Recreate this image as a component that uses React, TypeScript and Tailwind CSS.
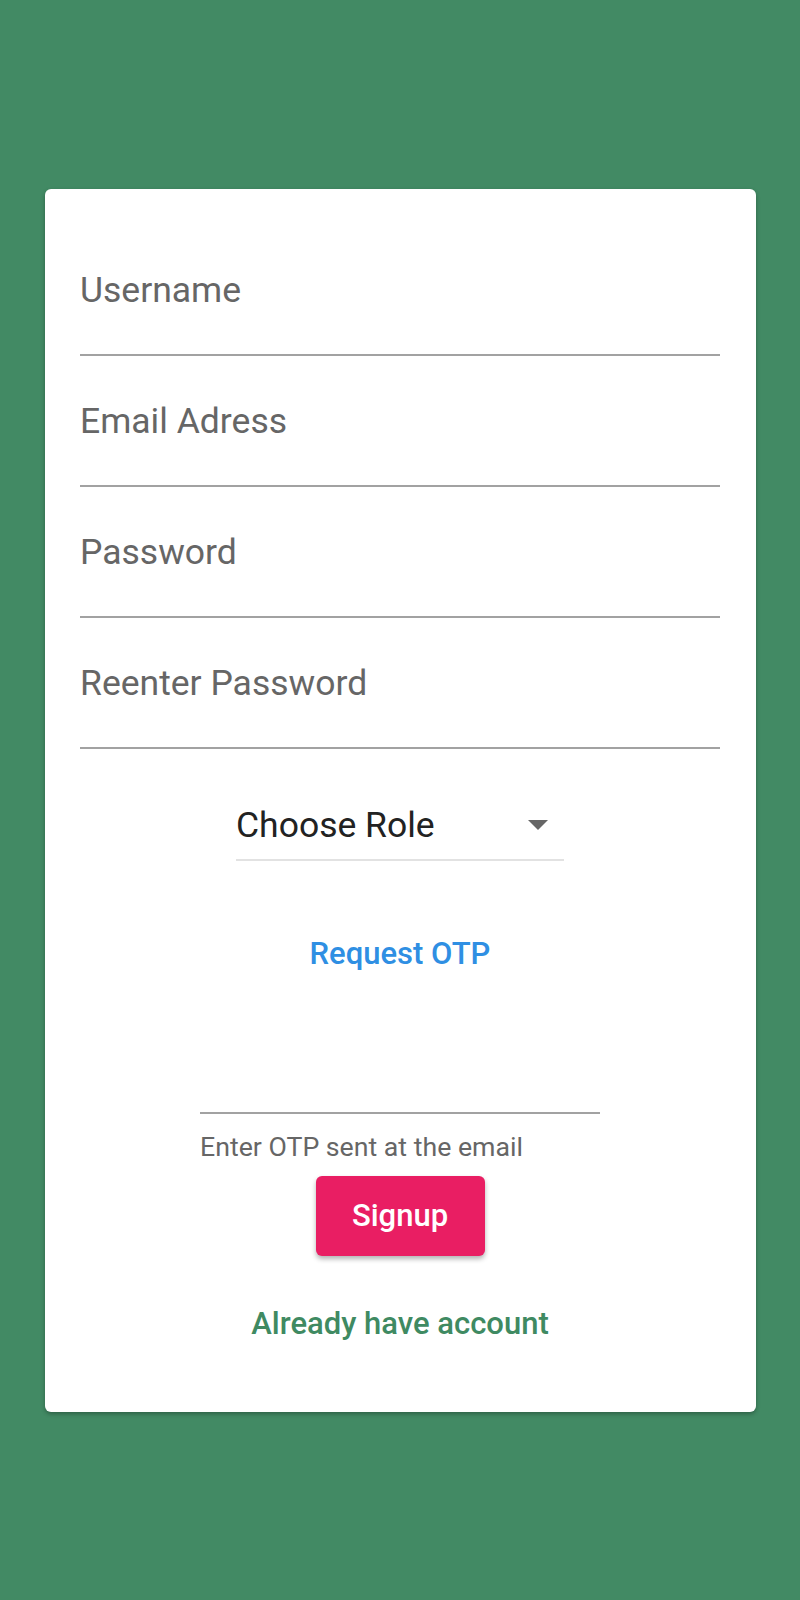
import React from "react";

const fields = ["Username", "Email Adress", "Password", "Reenter Password"];

export default function App() {
  return (
    <div
      className="w-[800px] h-[1600px] bg-[#428a64] pt-[189px]"
      style={{ fontFamily: "Roboto, 'Noto Sans', sans-serif" }}
    >
      <div className="ml-[45px] w-[711px] bg-white rounded-[6px] shadow-[0_2px_4px_rgba(0,0,0,0.3)] pt-[81px] pl-[35px] pr-[36px] pb-[70px] flex flex-col">
        {fields.map((f, i) => (
          <div
            key={f}
            className={`border-b-2 border-[#a2a2a2] pb-[43px] ${i > 0 ? "mt-[45px]" : ""}`}
          >
            <div className="text-[35.5px] leading-[41px] text-[#666666]">{f}</div>
          </div>
        ))}

        <div className="self-center mt-[56px] w-[328px] border-b-2 border-[#e2e2e2] pb-[14px] flex items-center justify-between">
          <span className="text-[35.5px] leading-[40px] text-[#222222]">Choose Role</span>
          <svg width="20" height="10" viewBox="0 0 20 10" className="mr-[16px]">
            <path d="M0 0 L20 0 L10 10 Z" fill="#666666" />
          </svg>
        </div>

        <div className="self-center mt-[75px] text-[31px] leading-[36px] font-medium text-[#2f8fe3]">
          Request OTP
        </div>

        <div className="self-center mt-[140px] w-[400px] flex flex-col">
          <div className="border-b-2 border-[#a2a2a2]" />
          <div className="mt-[18px] text-[26.7px] leading-[30px] text-[#666666]">
            Enter OTP sent at the email
          </div>
        </div>

        <button className="self-center mt-[14px] w-[169px] h-[80px] rounded-[6px] bg-[#e91e63] text-white text-[31px] font-medium shadow-[0_3px_5px_rgba(0,0,0,0.3)] flex items-center justify-center">
          Signup
        </button>

        <div className="self-center mt-[50px] text-[31px] leading-[36px] font-medium text-[#3f8a62]">
          Already have account
        </div>
      </div>
    </div>
  );
}
